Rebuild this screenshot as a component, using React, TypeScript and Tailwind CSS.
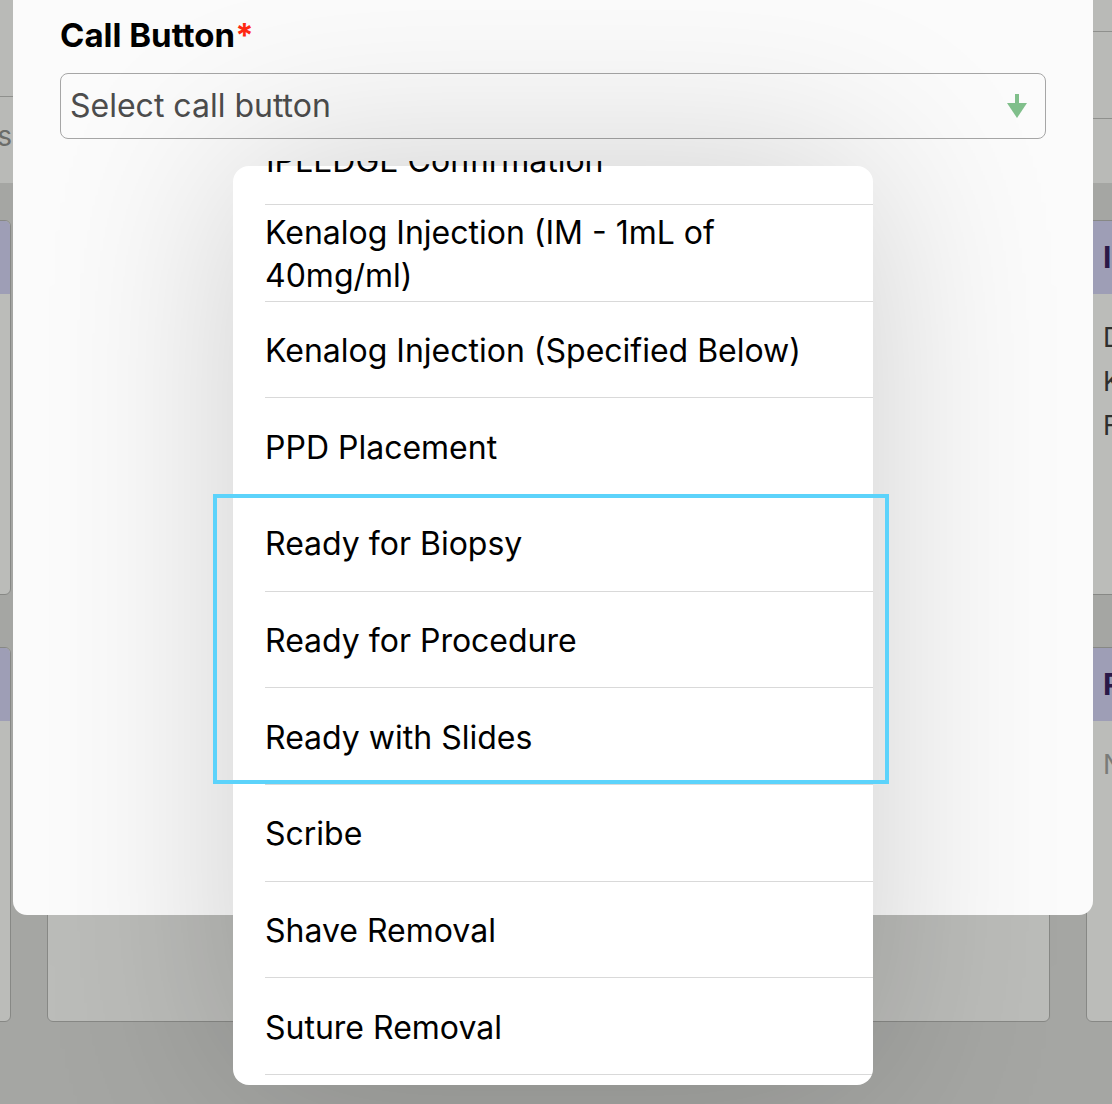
import React from 'react';

const options = [
  'Kenalog Injection (IM - 1mL of\n40mg/ml)',
  'Kenalog Injection (Specified Below)',
  'PPD Placement',
  'Ready for Biopsy',
  'Ready for Procedure',
  'Ready with Slides',
  'Scribe',
  'Shave Removal',
  'Suture Removal',
];

function BackCard({ title, lines, muted }: { title: string; lines: string[]; muted?: boolean }) {
  return (
    <div className="flex h-[375px] w-[1003px] shrink-0 flex-col overflow-hidden rounded-[6px] border border-[#878885] bg-[#bbbcb9]">
      <div className="flex h-[73px] items-center bg-[#9e9eb6] px-[16px] text-[30px] font-bold text-[#2a1848]">{title}</div>
      <div className={`flex flex-col px-[16px] pt-[22px] text-[27px] leading-[44px] ${muted ? 'text-[#7a7b78]' : 'text-[#2e2e2e]'}`}>
        {lines.map((l, i) => (
          <span key={i}>{l}</span>
        ))}
      </div>
    </div>
  );
}

function DownArrow() {
  return (
    <svg width="20" height="24" viewBox="0 0 20 24" className="shrink-0">
      <rect x="8" y="0" width="4" height="12" fill="#80bf8b" />
      <path d="M0 9 L20 9 L10 24 Z" fill="#80bf8b" />
    </svg>
  );
}

export default function App() {
  return (
    <div className="relative h-[1104px] w-[1112px] overflow-hidden bg-[#a5a6a3] font-['Inter',sans-serif]">
      {/* dimmed page behind the sheet */}
      <div className="flex flex-col">
        <div className="flex h-[183px] bg-[#b9bab7]">
          <div className="flex w-1/2 flex-col">
            <div className="h-[97px] border-b border-[#8f908d]" />
            <div className="mt-[18px] flex w-[12px] justify-end whitespace-nowrap text-[28px] text-[#6b6c69]">Rooms</div>
          </div>
          <div className="flex w-1/2 flex-col">
            <div className="h-[32px] border-b border-[#8f908d]" />
            <div className="h-[87px] border-b border-[#8f908d]" />
          </div>
        </div>
        <div className="flex flex-col gap-[52px] pt-[37px]">
          <div className="-ml-[992px] flex gap-[36px]">
            <BackCard title="Room 1" lines={['Waiting']} muted />
            <BackCard title="Room 2" lines={['Waiting']} />
            <BackCard title="Injection" lines={['Dr. Patel', 'Kim, Sarah', 'Follow up']} />
          </div>
          <div className="-ml-[992px] flex gap-[36px]">
            <BackCard title="Room 4" lines={['Waiting']} />
            <BackCard title="Room 5" lines={['Waiting']} />
            <BackCard title="Procedure" lines={['No patient']} muted />
          </div>
        </div>
      </div>

      {/* sheet */}
      <div className="absolute left-[13px] top-0 flex h-[915px] w-[1080px] flex-col rounded-b-[14px] bg-[#fbfbfb] px-[47px] pt-[16px]">
        <div className="text-[33px] font-bold leading-[38px] text-black">
          Call Button<span className="text-[#ff2a12]">*</span>
        </div>
        <div className="mt-[19px] flex h-[66px] items-center justify-between rounded-[8px] border-[1.5px] border-[#a6a6a6] pl-[9px] pr-[18px]">
          <span className="text-[32px] text-[#4d4d4d]">Select call button</span>
          <DownArrow />
        </div>
      </div>

      {/* picker */}
      <div className="absolute left-[233px] top-[166px] flex h-[919px] w-[640px] flex-col overflow-hidden rounded-[16px] bg-white shadow-[0_0_190px_rgba(0,0,0,0.18)]">
        <div className="h-[38px] shrink-0" />
        {options.map((o) => (
          <div
            key={o}
            className="ml-[32px] flex h-[96.67px] shrink-0 items-center border-t border-[#d9d9d9] pt-[2px] text-[32px] leading-[43px] text-black"
          >
            <span className="whitespace-pre-line">{o}</span>
          </div>
        ))}
        <div className="ml-[32px] shrink-0 border-t border-[#d9d9d9]" />
      </div>

      {/* row scrolled past the top */}
      <div className="absolute left-[266px] top-[161px] h-[12px] w-[500px] overflow-hidden">
        <div className="-mt-[16px] whitespace-nowrap text-[32px] leading-[32px] text-black">IPLEDGE Confirmation</div>
      </div>

      {/* highlight */}
      <div className="absolute left-[213px] top-[494px] h-[290px] w-[676px] border-[4px] border-[#5cd3fb]" />
    </div>
  );
}
